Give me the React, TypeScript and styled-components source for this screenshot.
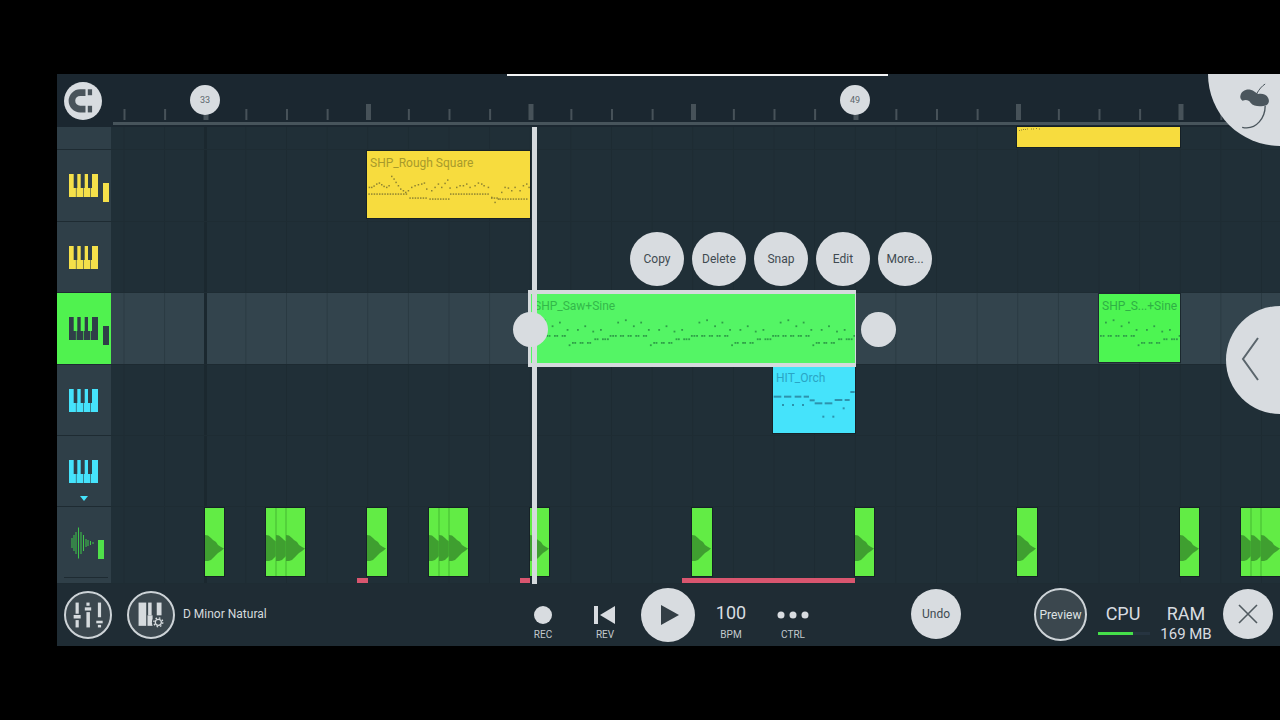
import styled, { createGlobalStyle } from 'styled-components';

const BEAT = 40.625;
const BAR = BEAT * 4;
const LIGHT = '#d8dce0';
const INK = '#3f4a51';

const GlobalStyle = createGlobalStyle`
  html, body {
    margin: 0;
    height: 100%;
    background: #000;
    overflow: hidden;
    font-family: Roboto, "Liberation Sans", sans-serif;
  }
`;

const Frame = styled.div`
  position: relative;
  width: 1223px;
  height: 572px;
  margin: 74px 0 0 57px;
  background: #1f2c34;
  overflow: hidden;
  display: flex;
  flex-direction: column;
`;

/* ruler */
const Ruler = styled.div`
  height: 53px;
  flex: none;
  display: flex;
  background: #1b2730;
`;

const MagnetSlot = styled.div`
  width: 54px;
  flex: none;
  display: flex;
  align-items: center;
  padding-left: 7px;
  box-sizing: border-box;
`;

const MagnetButton = styled.div`
  width: 38px;
  height: 38px;
  border-radius: 50%;
  background: ${LIGHT};
  display: flex;
`;

const Timeline = styled.div`
  position: relative;
  flex: 1;
  background-image:
    linear-gradient(to right, #475259 5px, transparent 5px),
    linear-gradient(to right, #475259 2px, transparent 2px),
    linear-gradient(#47545b, #47545b);
  background-size: ${BAR}px 16px, ${BEAT}px 11px, 100% 3px;
  background-position: 92.5px 30px, 12.5px 35px, 2px 48px;
  background-repeat: repeat-x, repeat-x, no-repeat;
`;

const ScrollMark = styled.div`
  position: absolute;
  left: 396px;
  top: 0;
  width: 381px;
  height: 2px;
  background: #f2f4f5;
`;

const BarBadge = styled.div<{ $left: number }>`
  position: absolute;
  left: ${(p) => p.$left}px;
  top: 11px;
  width: 30px;
  height: 30px;
  border-radius: 50%;
  background: ${LIGHT};
  color: #5b666c;
  font-size: 9px;
  display: flex;
  align-items: center;
  justify-content: center;
`;

const LogoCorner = styled.div`
  position: absolute;
  right: 0;
  top: 0;
  width: 72px;
  height: 72px;
  background: ${LIGHT};
  border-bottom-left-radius: 72px;
  z-index: 5;
  display: flex;
`;

/* tracks */
const TrackArea = styled.div`
  position: relative;
  height: 457px;
  flex: none;
`;

const Row = styled.div<{ $height: number }>`
  height: ${(p) => p.$height}px;
  display: flex;
`;

const TrackHead = styled.div<{ $selected?: boolean }>`
  position: relative;
  width: 54px;
  flex: none;
  box-sizing: border-box;
  display: flex;
  align-items: center;
  gap: 5px;
  padding-left: 12px;
  background: ${(p) => (p.$selected ? '#50f24f' : '#2f3f48')};
  border-bottom: 1px solid #1e2b32;
`;

const Level = styled.div<{ $color: string }>`
  width: 6px;
  height: 19px;
  margin-top: 14px;
  background: ${(p) => p.$color};
`;

const MoreArrow = styled.div`
  position: absolute;
  left: 23px;
  bottom: 5px;
  border-left: 4px solid transparent;
  border-right: 4px solid transparent;
  border-top: 5px solid #45e3fb;
`;

const SampleHead = styled(TrackHead)`
  padding-bottom: 5px;
  &::after {
    content: '';
    position: absolute;
    left: 7px;
    right: 3px;
    bottom: 5px;
    height: 1px;
    background: #1e2b32;
  }
`;

const Lane = styled.div<{ $selected?: boolean }>`
  position: relative;
  flex: 1;
  box-sizing: border-box;
  border-bottom: 1px solid ${(p) => (p.$selected ? '#1d2a31' : '#1e2c33')};
  background-color: ${(p) => (p.$selected ? '#33444d' : '#202f37')};
  background-image:
    linear-gradient(to right, #1b282f 3px, transparent 3px),
    linear-gradient(to right, ${(p) => (p.$selected ? '#2a3a42' : '#1d2b32')} 1px, transparent 1px);
  background-size: 3px 100%, ${BEAT}px 100%;
  background-position: 93px 0, 12.5px 0;
  background-repeat: no-repeat, repeat-x;
`;

const Clip = styled.div<{ $left: number; $top: number; $width: number; $height: number; $color: string }>`
  position: absolute;
  left: ${(p) => p.$left}px;
  top: ${(p) => p.$top}px;
  width: ${(p) => p.$width}px;
  height: ${(p) => p.$height}px;
  background: ${(p) => p.$color};
  box-shadow: 0 0 0 1px rgba(14, 24, 28, 0.55);
  overflow: hidden;
`;

const SelectedClip = styled(Clip)`
  box-sizing: border-box;
  border: solid #d5dadd;
  border-width: 4px 1px 4px 3px;
  box-shadow: none;
  z-index: 2;
`;

const ClipName = styled.div<{ $color: string; $left?: number }>`
  position: absolute;
  left: ${(p) => p.$left ?? 3}px;
  top: 4px;
  font-size: 12px;
  line-height: 16px;
  white-space: nowrap;
  color: ${(p) => p.$color};
`;

const NoteLayer = styled.svg`
  position: absolute;
  left: 0;
  top: 0;
`;

const LoopMark = styled.div<{ $left: number; $width: number }>`
  position: absolute;
  left: ${(p) => p.$left}px;
  width: ${(p) => p.$width}px;
  bottom: 0;
  height: 5px;
  background: #d9566f;
`;

/* things lying over the tracks */
const Playhead = styled.div`
  position: absolute;
  left: 474.5px;
  top: 0;
  bottom: 0;
  width: 5px;
  background: #d5dadd;
  z-index: 3;
`;

const Handle = styled.div<{ $left: number }>`
  position: absolute;
  left: ${(p) => p.$left}px;
  top: 185px;
  width: 35px;
  height: 35px;
  border-radius: 50%;
  background: ${LIGHT};
  z-index: 4;
`;

const BubbleRow = styled.div`
  position: absolute;
  left: 573px;
  top: 105px;
  display: flex;
  gap: 8px;
  z-index: 4;
`;

const Bubble = styled.button`
  width: 54px;
  height: 54px;
  padding: 0;
  border: 0;
  border-radius: 50%;
  background: ${LIGHT};
  color: ${INK};
  font: 12px Roboto, "Liberation Sans", sans-serif;
`;

const SideTab = styled.div`
  position: absolute;
  right: 0;
  top: 179px;
  width: 54px;
  height: 108px;
  border-radius: 54px 0 0 54px;
  background: ${LIGHT};
  z-index: 4;
  display: flex;
`;

/* bottom bar */
const BottomBar = styled.div`
  flex: 1;
  display: flex;
  align-items: center;
  color: ${LIGHT};
`;

const LeftGroup = styled.div`
  width: 462px;
  flex: none;
  box-sizing: border-box;
  padding-left: 7px;
  display: flex;
  align-items: center;
  gap: 15px;
`;

const RingButton = styled.div`
  width: 48px;
  height: 48px;
  flex: none;
  box-sizing: border-box;
  border: 2px solid #cdd3d7;
  border-radius: 50%;
  background: #3b474e;
  display: flex;
  overflow: hidden;
`;

const ScaleName = styled.div`
  margin-left: -7px;
  margin-top: -2px;
  font-size: 12px;
  color: #d5dadd;
`;

const Transport = styled.div<{ $gap: number }>`
  width: 48px;
  flex: none;
  align-self: stretch;
  margin-left: ${(p) => p.$gap}px;
  padding-top: 20px;
  box-sizing: border-box;
  display: flex;
  flex-direction: column;
  align-items: center;
`;

const TransportIcon = styled.div`
  height: 22px;
  display: flex;
  align-items: center;
  justify-content: center;
`;

const BpmValue = styled.div`
  height: 22px;
  font-size: 18px;
  line-height: 22px;
  margin-top: -2px;
  margin-bottom: 2px;
`;

const TransportLabel = styled.div`
  margin-top: 3px;
  font-size: 10px;
  line-height: 12px;
  color: #c3c9cd;
`;

const PlayButton = styled.div`
  width: 54px;
  height: 54px;
  flex: none;
  margin-left: 12px;
  border-radius: 50%;
  background: ${LIGHT};
  display: flex;
  align-items: center;
  justify-content: center;
`;

const SolidRound = styled.div<{ $gap: number }>`
  width: 50px;
  height: 50px;
  flex: none;
  margin-left: ${(p) => p.$gap}px;
  margin-top: -2px;
  border-radius: 50%;
  background: ${LIGHT};
  color: ${INK};
  font-size: 12px;
  display: flex;
  align-items: center;
  justify-content: center;
`;

const PreviewButton = styled.div`
  width: 53px;
  height: 53px;
  flex: none;
  margin-left: 73px;
  margin-top: -1px;
  box-sizing: border-box;
  border: 2px solid #cdd3d7;
  border-radius: 50%;
  background: #3b474e;
  color: #dfe3e5;
  font-size: 12px;
  display: flex;
  align-items: center;
  justify-content: center;
`;

const Meter = styled.div<{ $width: number; $gap: number }>`
  width: ${(p) => p.$width}px;
  flex: none;
  margin-left: ${(p) => p.$gap}px;
  align-self: stretch;
  padding-top: 19px;
  box-sizing: border-box;
  display: flex;
  flex-direction: column;
  align-items: center;
  font-size: 18px;
  line-height: 22px;
`;

const MeterValue = styled.div`
  font-size: 15px;
  line-height: 18px;
`;

const CpuTrack = styled.div`
  width: 52px;
  height: 3px;
  margin: 7px 0 0 2px;
  background: #263440;
`;

const CpuFill = styled.div`
  width: 35px;
  height: 100%;
  background: #45e04a;
`;

/* drawings */
const PianoIcon = ({ color }: { color: string }) => (
  <svg width="29" height="23" viewBox="0 0 29 23" style={{ flex: 'none' }}>
    <g fill={color}>
      <rect x="0" y="0" width="4.7" height="14.5" />
      <rect x="0" y="14" width="6.9" height="9" />
      <rect x="8.3" y="0" width="3.4" height="14.5" />
      <rect x="7.5" y="14" width="6.5" height="9" />
      <rect x="15.7" y="0" width="3.3" height="14.5" />
      <rect x="14.6" y="14" width="6.8" height="9" />
      <rect x="23" y="0" width="6" height="14.5" />
      <rect x="22" y="14" width="7" height="9" />
    </g>
  </svg>
);

const WAVE_BARS: [number, number][] = [
  [1, 5], [3, 8], [5, 11], [7.5, 15.5], [10, 11], [12.5, 8], [15, 4], [17, 3], [19.5, 2], [22, 1],
];

const WaveIcon = () => (
  <svg width="24" height="32" viewBox="0 0 24 32" style={{ flex: 'none', marginLeft: 2, marginRight: -2 }}>
    {WAVE_BARS.map(([x, h]) => (
      <line key={x} x1={x} x2={x} y1={16 - h} y2={16 + h} stroke="#3fd64a" strokeWidth="0.9" />
    ))}
  </svg>
);

const MagnetIcon = () => (
  <svg width="38" height="38" viewBox="43 33 115 115">
    <path d="M108 65H92A25 25 0 0 0 92 115H108" fill="none" stroke="#4a545b" strokeWidth="20" />
    <rect x="115" y="55" width="13" height="18" fill="#4a545b" />
    <rect x="115" y="105" width="13" height="20" fill="#4a545b" />
  </svg>
);

const FruitLogo = () => (
  <svg width="72" height="72" viewBox="625 12 215 216">
    <path
      d="M722 76C724 64 738 56 752 59C762 61 768 68 775 72C786 70 800 72 805 84C812 98 802 108 790 108C775 110 760 108 752 98C748 90 738 88 728 92C722 88 720 82 722 76Z"
      fill="#4b565d"
    />
    <path d="M796 42C786 48 778 58 770 72" fill="none" stroke="#4b565d" strokeWidth="3" />
    <path d="M796 108C796 140 772 182 727 172" fill="none" stroke="#4b565d" strokeWidth="4" />
  </svg>
);

const MixerIcon = () => (
  <svg width="44" height="44" viewBox="45 365 138 138" fill="#d6dbde">
    <rect x="75" y="395" width="10" height="35" />
    <rect x="69" y="434" width="22" height="11" />
    <rect x="75" y="450" width="10" height="23" />
    <rect x="109" y="395" width="10" height="10" />
    <rect x="104" y="410" width="20" height="10" />
    <rect x="109" y="425" width="11" height="48" />
    <rect x="145" y="395" width="10" height="46" />
    <rect x="140" y="452" width="20" height="8" />
    <rect x="145" y="465" width="10" height="8" />
  </svg>
);

const PianoGearIcon = () => (
  <svg width="44" height="44" viewBox="233 365 138 138" fill="#d6dbde">
    <rect x="263" y="395" width="24" height="73" />
    <rect x="293" y="395" width="11" height="40" />
    <rect x="291" y="435" width="16" height="33" />
    <rect x="320" y="395" width="15" height="40" />
    <circle cx="325" cy="457" r="20" fill="#3b474e" />
    <circle cx="325" cy="457" r="9.5" fill="none" stroke="#d6dbde" strokeWidth="4" />
    <circle cx="325" cy="457" r="14" fill="none" stroke="#d6dbde" strokeWidth="4" strokeDasharray="5 6" />
  </svg>
);

const Dots = ({ points, color, size = 2 }: { points: number[][]; color: string; size?: number }) => (
  <NoteLayer width="400" height="80" fill={color}>
    {points.map(([x, y, w], i) => (
      <rect key={i} x={x} y={y} width={w ?? size} height={size} />
    ))}
  </NoteLayer>
);

// note positions were read off a 3x crop, so they are divided back down here
const SAW_RAW = [
  [75, 110], [98, 103], [122, 121], [144, 110], [167, 132], [198, 132], [220, 121], [244, 137], [267, 132],
  [60, 150], [68, 150], [83, 150], [90, 150], [106, 150], [113, 150], [129, 150], [136, 150], [152, 150], [159, 150],
  [173, 178], [183, 171], [190, 171], [206, 171], [212, 171], [228, 171], [235, 171],
  [250, 160], [257, 160], [273, 160], [280, 160], [288, 160], [296, 150],
];
const sawPattern = SAW_RAW.map(([x, y]) => [(x - 57) / 3, (y - 27) / 3]);
const sawRepeated = [0, 1, 2, 3].flatMap((k) => sawPattern.map(([x, y]) => [x + k * BEAT * 2 - 1, y]));

const ROUGH_UPPER = [
  [28, 140], [35, 140], [42, 136], [50, 130], [58, 127], [65, 132], [72, 137], [80, 140], [87, 135], [95, 107],
  [102, 115], [108, 125], [115, 135], [122, 145], [130, 150], [137, 155], [145, 150], [155, 140], [165, 135],
  [175, 132], [185, 130], [193, 127], [200, 145], [215, 150], [225, 140], [235, 130], [245, 140], [255, 128],
  [263, 118], [270, 142], [290, 140], [300, 135], [310, 135], [320, 130], [330, 140], [345, 135], [355, 127],
  [365, 130], [372, 135], [385, 140], [395, 170], [405, 185], [415, 175], [425, 155], [435, 140], [445, 142],
  [455, 150], [465, 140], [480, 150], [490, 135], [500, 130], [507, 140],
];
const ROUGH_RUNS = [
  [27, 145, 160], [150, 205, 172], [210, 270, 175], [272, 390, 160], [395, 415, 172], [420, 505, 175],
];
const roughPoints = [
  ...ROUGH_UPPER,
  ...ROUGH_RUNS.flatMap(([from, to, y]) => {
    const out: number[][] = [];
    for (let x = from; x <= to; x += 8) out.push([x, y]);
    return out;
  }),
].map(([x, y]) => [(x - 23) / 3, (y - 33) / 3]);

const ORCH_DASHES = [
  [822, 497, 23], [853, 497, 22], [885, 497, 20], [912, 497, 16], [930, 508, 15], [945, 517, 23], [975, 517, 23],
  [1005, 507, 23], [1035, 507, 15], [1052, 483, 13], [847, 522, 6], [877, 522, 6], [907, 522, 6], [968, 557, 6],
  [998, 557, 6], [1029, 532, 6],
].map(([x, y, w]) => [(x - 820) / 3, (y - 408) / 3, w / 3]);

const TOP_SCRAPS = [
  [2, 3], [4, 2.5], [6, 2], [8, 2], [10, 1.5], [14, 1.5], [16, 1.5], [19, 1], [22, 1.5],
];

const HIT_PATH = 'M0 27L3 27.5L6 30L8 32L11 34L13 37L16 39L19 40.5L16 43L13 45L11 47L8 50L6 52L3 53L0 53Z';

const SAMPLES: { x: number; w: number; hits: number[] }[] = [
  { x: 205, w: 19, hits: [0] },
  { x: 266, w: 39, hits: [0, 10, 20] },
  { x: 367, w: 20, hits: [0] },
  { x: 429, w: 39, hits: [0, 10, 20] },
  { x: 530, w: 19, hits: [0] },
  { x: 692, w: 20, hits: [0] },
  { x: 855, w: 19, hits: [0] },
  { x: 1017, w: 20, hits: [0] },
  { x: 1180, w: 19, hits: [0] },
  { x: 1241, w: 39, hits: [0, 10, 20] },
];

const LANE_X = 111;

const App = () => (
  <>
    <GlobalStyle />
    <Frame>
      <Ruler>
        <MagnetSlot>
          <MagnetButton>
            <MagnetIcon />
          </MagnetButton>
        </MagnetSlot>
        <Timeline>
          <ScrollMark />
          <BarBadge $left={79}>33</BarBadge>
          <BarBadge $left={729}>49</BarBadge>
        </Timeline>
      </Ruler>
      <LogoCorner>
        <FruitLogo />
      </LogoCorner>

      <TrackArea>
        <Row $height={23}>
          <TrackHead />
          <Lane>
            <Clip $left={906} $top={0} $width={163} $height={20} $color="#f7dc3e">
              <Dots points={TOP_SCRAPS} color="#8d8230" size={1} />
            </Clip>
          </Lane>
        </Row>
        <Row $height={72}>
          <TrackHead>
            <PianoIcon color="#f5e04a" />
            <Level $color="#f5e04a" />
          </TrackHead>
          <Lane>
            <Clip $left={256} $top={1} $width={163} $height={67} $color="#f7dc3e">
              <ClipName $color="#a89a2b">SHP_Rough Square</ClipName>
              <Dots points={roughPoints} color="#8f8430" size={1.5} />
            </Clip>
          </Lane>
        </Row>
        <Row $height={71}>
          <TrackHead>
            <PianoIcon color="#f5e04a" />
          </TrackHead>
          <Lane />
        </Row>
        <Row $height={72}>
          <TrackHead $selected>
            <PianoIcon color="#2f3f48" />
            <Level $color="#2f3f48" />
          </TrackHead>
          <Lane $selected>
            <SelectedClip $left={417} $top={-3} $width={328} $height={77} $color="#54f565">
              <ClipName $color="#33b84a" $left={3}>SHP_Saw+Sine</ClipName>
              <Dots points={sawRepeated} color="#2f9e48" size={1.8} />
            </SelectedClip>
            <Clip $left={988} $top={1} $width={81} $height={68} $color="#4df552">
              <ClipName $color="#2fb045">SHP_S...+Sine</ClipName>
              <Dots points={sawPattern} color="#2f9e48" size={1.8} />
            </Clip>
          </Lane>
        </Row>
        <Row $height={71}>
          <TrackHead>
            <PianoIcon color="#45e3fb" />
          </TrackHead>
          <Lane>
            <Clip $left={662} $top={1} $width={82} $height={67} $color="#45e3fb">
              <ClipName $color="#2aa5c5">HIT_Orch</ClipName>
              <Dots points={ORCH_DASHES} color="#2d93ad" size={2} />
            </Clip>
          </Lane>
        </Row>
        <Row $height={71}>
          <TrackHead>
            <PianoIcon color="#45e3fb" />
            <MoreArrow />
          </TrackHead>
          <Lane />
        </Row>
        <Row $height={77}>
          <SampleHead>
            <WaveIcon />
            <Level $color="#50e04a" />
          </SampleHead>
          <Lane>
            {SAMPLES.map(({ x, w, hits }) => (
              <Clip key={x} $left={x - LANE_X} $top={1} $width={w} $height={68} $color="#62ec45">
                <NoteLayer width={w} height="68">
                  {hits.map((hit) => (
                    <g key={hit} transform={`translate(${hit} 0)`}>
                      {hit > 0 && <rect x="-0.5" width="1" height="68" fill="#45b833" />}
                      <path d={HIT_PATH} fill="#3f9f30" />
                    </g>
                  ))}
                </NoteLayer>
              </Clip>
            ))}
            <LoopMark $left={246} $width={11} />
            <LoopMark $left={409} $width={10} />
            <LoopMark $left={571} $width={173} />
          </Lane>
        </Row>

        <Playhead />
        <Handle $left={456} />
        <Handle $left={804} />
        <BubbleRow>
          {['Copy', 'Delete', 'Snap', 'Edit', 'More...'].map((label) => (
            <Bubble key={label}>{label}</Bubble>
          ))}
        </BubbleRow>
        <SideTab>
          <svg width="54" height="108" viewBox="0 0 54 108">
            <path d="M32 32L17 53L32 74" fill="none" stroke="#5a656c" strokeWidth="2" />
          </svg>
        </SideTab>
      </TrackArea>

      <BottomBar>
        <LeftGroup>
          <RingButton>
            <MixerIcon />
          </RingButton>
          <RingButton>
            <PianoGearIcon />
          </RingButton>
          <ScaleName>D Minor Natural</ScaleName>
        </LeftGroup>
        <Transport $gap={0}>
          <TransportIcon>
            <svg width="18" height="18" viewBox="0 0 18 18">
              <circle cx="9" cy="9" r="9" fill={LIGHT} />
            </svg>
          </TransportIcon>
          <TransportLabel>REC</TransportLabel>
        </Transport>
        <Transport $gap={14}>
          <TransportIcon>
            <svg width="22" height="20" viewBox="0 0 22 20" fill={LIGHT}>
              <rect x="0" y="1" width="4" height="18" />
              <path d="M21 1V19L6 10Z" />
            </svg>
          </TransportIcon>
          <TransportLabel>REV</TransportLabel>
        </Transport>
        <PlayButton>
          <svg width="18" height="20" viewBox="0 0 18 20" style={{ marginLeft: 4 }}>
            <path d="M0 0L18 10L0 20Z" fill="#333e45" />
          </svg>
        </PlayButton>
        <Transport $gap={12}>
          <BpmValue>100</BpmValue>
          <TransportLabel>BPM</TransportLabel>
        </Transport>
        <Transport $gap={14}>
          <TransportIcon>
            <svg width="32" height="8" viewBox="0 0 32 8" fill={LIGHT}>
              <circle cx="4" cy="4" r="3.5" />
              <circle cx="16" cy="4" r="3.5" />
              <circle cx="28" cy="4" r="3.5" />
            </svg>
          </TransportIcon>
          <TransportLabel>CTRL</TransportLabel>
        </Transport>
        <SolidRound $gap={94}>Undo</SolidRound>
        <PreviewButton>Preview</PreviewButton>
        <Meter $width={52} $gap={10}>
          CPU
          <CpuTrack>
            <CpuFill />
          </CpuTrack>
        </Meter>
        <Meter $width={60} $gap={7}>
          RAM
          <MeterValue>169 MB</MeterValue>
        </Meter>
        <SolidRound $gap={7}>
          <svg width="20" height="20" viewBox="0 0 20 20">
            <path d="M1 1L19 19M19 1L1 19" stroke="#505a60" strokeWidth="1.6" />
          </svg>
        </SolidRound>
      </BottomBar>
    </Frame>
  </>
);

export default App;
